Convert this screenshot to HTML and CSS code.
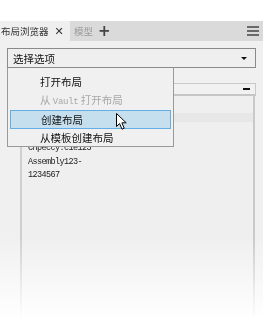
FILE: index.html
```html
<!DOCTYPE html>
<html>
<head>
<meta charset="utf-8">
<link rel="stylesheet" href="styles.css">
</head>
<body>
<div class="top-space"></div>
<div class="fade">
  <div class="tabbar">
    <div class="tab active"><span>布局浏览器</span><span class="close">✕</span></div>
    <div class="tab"><span class="dim">模型</span><span class="plus">+</span></div>
    <div class="spacer"></div>
    <div class="menu-icon"><i></i><i></i><i></i></div>
  </div>
  <div class="content">
    <div class="select"><span>选择选项</span><span class="caret"></span></div>
    <div class="field"><span class="minus"></span></div>
    <div class="panel">
      <div class="row-blank"></div>
      <div class="row-sel"></div>
      <div class="tree">
        <div class="line">Chpeccy.c1e123</div>
        <div class="line">Assembly123-</div>
        <div class="line">1234567</div>
      </div>
    </div>
  </div>
  <div class="dropdown">
    <div class="item">打开布局</div>
    <div class="item disabled">从 <span class="mono">Vault</span> 打开布局</div>
    <div class="item hover">创建布局</div>
    <div class="item">从模板创建布局</div>
    <svg class="cursor" width="12" height="18" viewBox="0 0 12 18"><path d="M0.5 0.5 L0.5 13.5 L3.6 10.6 L6 16.2 L8.2 15.2 L5.9 9.8 L10.2 9.8 Z" fill="#fff" stroke="#000" stroke-width="1" stroke-linejoin="miter"/></svg>
  </div>
</div>
</body>
</html>
```
FILE: styles.css
```css
html, body { margin: 0; padding: 0; background: #fff; }
body {
  width: 263px; height: 317px; overflow: hidden; position: relative;
  font-family: "Noto Sans CJK SC", "Noto Sans", sans-serif;
  color: #222;
}
.top-space { height: 21px; }
.fade {
  height: 296px; position: relative; background: #f0f0f0; overflow: hidden;
  -webkit-mask-image: linear-gradient(to bottom, #000 0, #000 215px, rgba(0,0,0,0.05) 296px);
  mask-image: linear-gradient(to bottom, #000 0, #000 215px, rgba(0,0,0,0.05) 296px);
}
.tabbar {
  height: 20px; background: #dadada; display: flex; align-items: center;
}
.tab { height: 20px; display: flex; align-items: center; font-size: 9.5px; color: #333; }
.tab.active { background: #efefef; width: 70px; padding-left: 1px; box-sizing: border-box; gap: 6px; }
.tab .close { font-size: 11px; color: #333; font-family: "DejaVu Sans", sans-serif; }
.tab .dim { color: #9a9a9a; margin-left: 4px; }
.tab .plus { font-size: 15px; color: #444; margin-left: 5px; font-family: "DejaVu Sans", sans-serif; line-height: 1; font-weight: bold; }
.spacer { flex: 1; }
.menu-icon { width: 12px; margin-right: 4px; display: flex; flex-direction: column; gap: 2px; }
.menu-icon i { display: block; height: 2px; background: #6a6a6a; }
.content { padding: 7px 7px 0 7px; }
.select {
  height: 20px; box-sizing: border-box; border: 1px solid #8a8a8a; background: #efefef;
  display: flex; align-items: center; justify-content: space-between; padding: 0 5px 0 5px;
  font-size: 10.5px; color: #111;
}
.caret { width: 0; height: 0; border-left: 3px solid transparent; border-right: 3px solid transparent; border-top: 3px solid #111; margin-right: 3px; }
.field {
  margin: 15px 0 0 13px; height: 13px; box-sizing: border-box; border: 1px solid #c9c9c9; border-bottom: 2px solid #c6c6c6;
  background: #f1f1f1; display: flex; align-items: center; justify-content: flex-end; padding-right: 5px;
}
.minus { width: 7px; height: 2px; background: #111; }
.panel {
  margin-left: 13px; margin-right: 1px; height: 221px; box-sizing: border-box;
  border-left: 2px solid #cfcfcf; border-right: 2px solid #c9c9c9; background: #efefef;
}
.row-blank { height: 17px; }
.row-sel { height: 9px; background: #e7e7e7; }
.tree { padding: 20px 0 0 6px; font-family: "Liberation Mono", "DejaVu Sans Mono", monospace; font-size: 8.5px; color: #222; }
.line { height: 13.5px; line-height: 13.5px; letter-spacing: -0.6px; }
.dropdown {
  position: absolute; left: 7px; top: 47px; width: 167px; height: 79px; box-sizing: border-box;
  background: #f0f0f0; border: 1px solid #9a9a9a; border-top: none;
  padding-top: 5px;
}
.item { height: 18px; line-height: 18px; padding-left: 32px; font-size: 10.5px; color: #111; box-sizing: border-box; }
.item.disabled { color: #a8a8a8; }
.mono { font-family: "Liberation Mono", monospace; font-size: 9px; letter-spacing: -0.3px; }
.item.hover { margin: 1px 2px 0 2px; padding-left: 30px; height: 19px; line-height: 17px; background: #c6dfee; border: 1px solid #64aee6; }
.cursor { position: absolute; left: 108px; top: 45px; }
```
